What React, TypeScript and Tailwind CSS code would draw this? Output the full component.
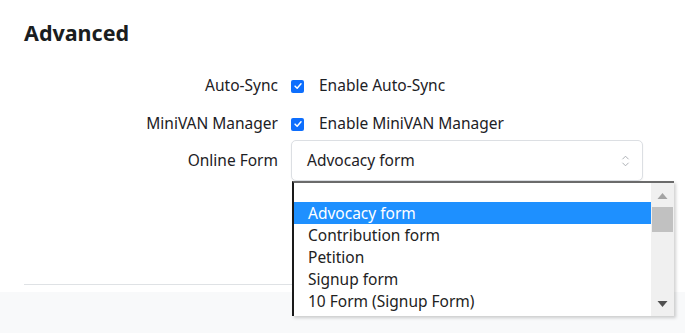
const options = [
  "",
  "Advocacy form",
  "Contribution form",
  "Petition",
  "Signup form",
  "10 Form (Signup Form)",
];

const CheckBox = () => (
  <span className="flex h-[13px] w-[13px] items-center justify-center rounded-[2px] bg-[#0d6efd]">
    <svg viewBox="0 0 12 12" className="h-[10px] w-[10px]">
      <path d="M2.5 6.2 L5 8.6 L9.6 3.4" fill="none" stroke="#fff" strokeWidth="1.8" strokeLinecap="round" strokeLinejoin="round" />
    </svg>
  </span>
);

const Row = ({ label, children, className = "" }: { label: string; children: React.ReactNode; className?: string }) => (
  <div className={`flex items-center gap-[13px] ${className}`}>
    <div className="w-[254px] text-right text-[15.5px] text-[#1d2125]">{label}</div>
    <div className="flex flex-1 items-center">{children}</div>
  </div>
);

export default function App() {
  return (
    <div className="relative h-[333px] w-[685px] overflow-hidden bg-white font-['Noto_Sans',sans-serif] text-[#1d2125]">
      <div className="px-6 pt-[17px]">
        <h2 className="text-[21.5px] font-bold leading-[32px] text-[#1a1d20]">Advanced</h2>

        <div className="mt-[24px] flex flex-col">
          <Row label="Auto-Sync" className="h-[26px]">
            <CheckBox />
            <span className="ml-[15px] text-[15.5px]">Enable Auto-Sync</span>
          </Row>
          <Row label="MiniVAN Manager" className="mt-[12px] h-[26px]">
            <CheckBox />
            <span className="ml-[15px] text-[15.5px]">Enable MiniVAN Manager</span>
          </Row>
          <Row label="Online Form" className="mt-[3px]">
            <div className="flex h-[41px] w-[352px] items-center justify-between rounded-[5px] border border-[#dcdfe3] bg-white pl-[15px] pr-[12px] shadow-[0_1px_2px_rgba(0,0,0,0.06)]">
              <span className="text-[15.5px]">Advocacy form</span>
              <svg viewBox="0 0 10 16" className="h-[14px] w-[9px]">
                <path d="M1.5 6 L5 2.5 L8.5 6 M1.5 10 L5 13.5 L8.5 10" fill="none" stroke="#a9adb2" strokeWidth="1.1" />
              </svg>
            </div>
          </Row>
        </div>

        <div className="mt-[103px] border-t border-[#dfe2e5]" />
      </div>
      <div className="mt-[7px] h-[60px] bg-[#f8f9fa]" />

      {/* open select popup */}
      <div className="absolute left-[292px] top-[181px] flex h-[135px] w-[382px] border-l-2 border-t-2 border-l-[#1a1a1a] border-t-[#6b6b6b] bg-white shadow-[2px_2px_3px_rgba(0,0,0,0.18)]">
        <div className="flex-1">
          {options.map((o, i) => (
            <div
              key={i}
              className={`pl-[14px] text-[15.5px] leading-[22px] ${i === 0 ? "h-[19px]" : "h-[22px]"} ${i === 1 ? "bg-[#1e90ff] text-white" : "text-[#222]"}`}
            >
              {o}
            </div>
          ))}
        </div>
        <div className="flex w-[23px] flex-col items-center bg-[#f0f0f0]">
          <svg viewBox="0 0 10 6" className="mt-[10px] h-[6px] w-[11px]">
            <path d="M0 6 L5 0 L10 6 Z" fill="#a3a3a3" />
          </svg>
          <div className="mt-[8px] h-[25px] w-[21px] bg-[#c1c1c1]" />
          <div className="flex-1" />
          <svg viewBox="0 0 10 6" className="mb-[9px] h-[6px] w-[11px]">
            <path d="M0 0 L10 0 L5 6 Z" fill="#505050" />
          </svg>
        </div>
      </div>
    </div>
  );
}
